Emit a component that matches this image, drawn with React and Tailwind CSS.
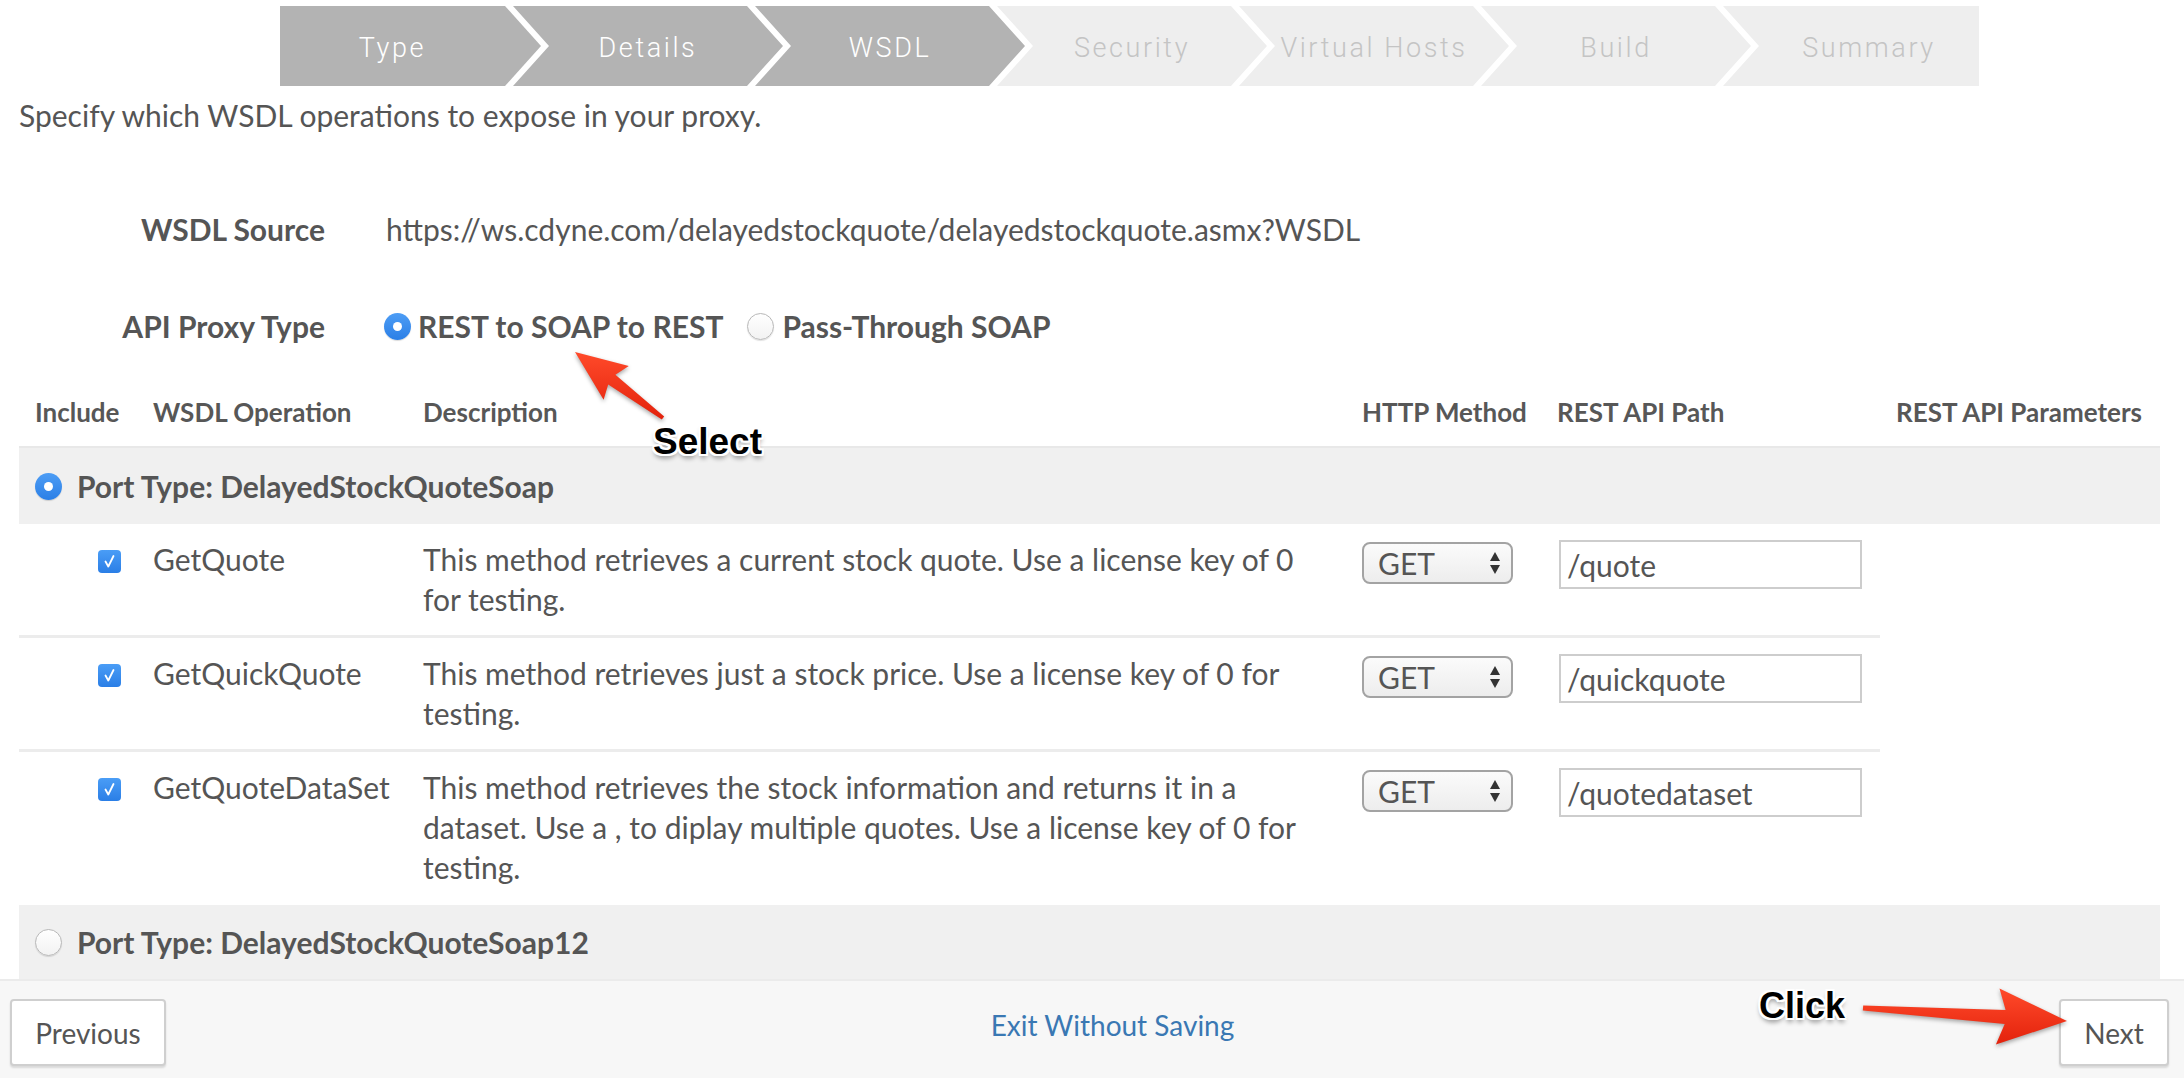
import React from "react";

const steps = [
  { label: "Type", active: true },
  { label: "Details", active: true },
  { label: "WSDL", active: true },
  { label: "Security", active: false },
  { label: "Virtual Hosts", active: false },
  { label: "Build", active: false },
  { label: "Summary", active: false },
];

function Step({ label, active, index, count }) {
  const first = index === 0;
  const last = index === count - 1;
  let shape;
  if (first) {
    shape =
      "w-[261px] pr-[36px] [clip-path:polygon(0_0,calc(100%_-_36px)_0,100%_50%,calc(100%_-_36px)_100%,0_100%)]";
  } else if (last) {
    shape =
      "w-[256px] pl-[36px] -ml-[28px] [clip-path:polygon(0_0,100%_0,100%_100%,0_100%,36px_50%)]";
  } else {
    shape =
      "w-[270px] px-[36px] -ml-[28px] [clip-path:polygon(0_0,calc(100%_-_36px)_0,100%_50%,calc(100%_-_36px)_100%,0_100%,36px_50%)]";
  }
  return (
    <div
      className={`${shape} h-[80px] shrink-0 flex items-center justify-center pt-[4px] ${
        active ? "bg-[#b3b3b3] text-white" : "bg-[#eeeeee] text-[#c4c4c4]"
      }`}
    >
      <span className="font-['Roboto','Liberation_Sans',sans-serif] font-light text-[27px] leading-none tracking-[2.6px] whitespace-nowrap">
        {label}
      </span>
    </div>
  );
}

function Radio({ checked }) {
  if (checked) {
    return (
      <span className="flex w-[27px] h-[27px] rounded-full bg-gradient-to-b from-[#4d9df5] to-[#2b7fe6] items-center justify-center shrink-0 shadow-[0_1px_1px_rgba(0,0,0,0.15)]">
        <span className="block w-[9px] h-[9px] rounded-full bg-white" />
      </span>
    );
  }
  return (
    <span className="block w-[27px] h-[27px] rounded-full border border-[#b8b8b8] bg-gradient-to-b from-white to-[#f2f2f2] shrink-0 shadow-[0_1px_1px_rgba(0,0,0,0.12)]" />
  );
}

function Checkbox() {
  return (
    <span className="flex w-[23px] h-[23px] rounded-[4px] bg-gradient-to-b from-[#4a9df6] to-[#2a7ee6] items-center justify-center shrink-0">
      <svg width="23" height="23" viewBox="0 0 23 23">
        <path d="M7.5 11.5 L10.3 16.5 L15.5 6" fill="none" stroke="#fff" strokeWidth="1.8" strokeLinecap="round" strokeLinejoin="round" />
      </svg>
    </span>
  );
}

function MethodSelect() {
  return (
    <div className="w-[151px] h-[42px] rounded-[8px] border-2 border-[#a3a3a3] bg-gradient-to-b from-[#fbfbfb] to-[#ededed] flex items-center justify-between pl-[14px] pr-[10px]">
      <span className="leading-none">GET</span>
      <svg width="12" height="24" viewBox="0 0 12 24">
        <path d="M6 1 L11 10 L1 10 Z" fill="#333" />
        <path d="M6 23 L11 14 L1 14 Z" fill="#333" />
      </svg>
    </div>
  );
}

function PathInput({ value }) {
  return (
    <div className="w-[303px] h-[49px] border-2 border-[#cdcdcd] bg-white flex items-center pl-[6px] mt-[1px]">
      <span>{value}</span>
    </div>
  );
}

function arrowPoints(x1, y1, x2, y2, headLen, headHalf, tailW, neckW) {
  const dx = x2 - x1;
  const dy = y2 - y1;
  const L = Math.hypot(dx, dy);
  const ux = dx / L;
  const uy = dy / L;
  const nx = -uy;
  const ny = ux;
  const bx = x2 - ux * headLen;
  const by = y2 - uy * headLen;
  const gx = x2 - ux * headLen * 1.12;
  const gy = y2 - uy * headLen * 1.12;
  const pts = [
    [x1 + (nx * tailW) / 2, y1 + (ny * tailW) / 2],
    [bx + (nx * neckW) / 2, by + (ny * neckW) / 2],
    [gx + nx * headHalf, gy + ny * headHalf],
    [x2, y2],
    [gx - nx * headHalf, gy - ny * headHalf],
    [bx - (nx * neckW) / 2, by - (ny * neckW) / 2],
    [x1 - (nx * tailW) / 2, y1 - (ny * tailW) / 2],
  ];
  return pts.map((p) => `${p[0].toFixed(1)},${p[1].toFixed(1)}`).join(" ");
}

const rows = [
  {
    name: "GetQuote",
    lines: ["This method retrieves a current stock quote. Use a license key of 0", "for testing."],
    path: "/quote",
    h: "h-[114px] border-b-[3px] border-[#ececec]",
  },
  {
    name: "GetQuickQuote",
    lines: ["This method retrieves just a stock price. Use a license key of 0 for", "testing."],
    path: "/quickquote",
    h: "h-[114px] border-b-[3px] border-[#ececec]",
  },
  {
    name: "GetQuoteDataSet",
    lines: [
      "This method retrieves the stock information and returns it in a",
      "dataset. Use a , to diplay multiple quotes. Use a license key of 0 for",
      "testing.",
    ],
    path: "/quotedataset",
    h: "h-[153px]",
  },
];

const annot =
  "font-['Liberation_Sans',Arial,sans-serif] font-bold text-black leading-none [text-shadow:-2px_-2px_0_#fff,2px_-2px_0_#fff,-2px_2px_0_#fff,2px_2px_0_#fff,0_-2px_0_#fff,0_2px_0_#fff,-2px_0_0_#fff,2px_0_0_#fff,0_4px_5px_rgba(0,0,0,0.45)]";

export default function App() {
  return (
    <div className="relative w-[2184px] h-[1078px] overflow-hidden bg-white font-['Lato','Open_Sans',sans-serif] text-[#555555] text-[30px] leading-[40px]">
      <div className="flex flex-col h-full">
        {/* Stepper */}
        <div className="flex pt-[6px] pl-[280px]">
          {steps.map((s, i) => (
            <Step key={s.label} label={s.label} active={s.active} index={i} count={steps.length} />
          ))}
        </div>

        {/* Intro */}
        <p className="mt-[9px] pl-[19px] h-[40px]">Specify which WSDL operations to expose in your proxy.</p>

        {/* WSDL source */}
        <div className="mt-[74px] flex h-[40px] items-center">
          <div className="w-[325px] text-right font-bold">WSDL Source</div>
          <div className="ml-[61px]">https://ws.cdyne.com/delayedstockquote/delayedstockquote.asmx?WSDL</div>
        </div>

        {/* API proxy type */}
        <div className="mt-[57px] flex h-[40px] items-center">
          <div className="w-[325px] text-right font-bold">API Proxy Type</div>
          <div className="ml-[59px] flex items-center">
            <Radio checked />
            <span className="ml-[7px] font-bold">REST to SOAP to REST</span>
            <span className="ml-[24px] flex">
              <Radio />
            </span>
            <span className="ml-[8px] font-bold">Pass-Through SOAP</span>
          </div>
        </div>

        {/* Table header */}
        <div className="mt-[46px] ml-[19px] w-[2141px] h-[40px] grid grid-cols-[134px_270px_939px_195px_339px_1fr] font-bold text-[26px] text-[#575757] items-center">
          <div className="pl-[16px]">Include</div>
          <div>WSDL Operation</div>
          <div>Description</div>
          <div>HTTP Method</div>
          <div>REST API Path</div>
          <div>REST API Parameters</div>
        </div>

        {/* Port type 1 */}
        <div className="mt-[14px] ml-[19px] w-[2141px] h-[78px] bg-[#f0f0f0] border-t-2 border-[#e8e8e8] flex items-center pl-[16px]">
          <Radio checked />
          <span className="ml-[15px] font-bold">Port Type: DelayedStockQuoteSoap</span>
        </div>

        {/* Operation rows */}
        <div className="ml-[19px] w-[1861px] flex flex-col">
          {rows.map((r) => (
            <div key={r.name} className={`${r.h} grid grid-cols-[134px_270px_939px_195px_1fr] pt-[15px]`}>
              <div className="pl-[79px] pt-[11px]">
                <Checkbox />
              </div>
              <div className="whitespace-nowrap">{r.name}</div>
              <div className="whitespace-nowrap">
                {r.lines.map((l, i) => (
                  <div key={i}>{l}</div>
                ))}
              </div>
              <div className="pt-[3px]">
                <MethodSelect />
              </div>
              <div className="pl-[2px]">
                <PathInput value={r.path} />
              </div>
            </div>
          ))}
        </div>

        {/* Port type 2 */}
        <div className="ml-[19px] w-[2141px] h-[74px] bg-[#f0f0f0] flex items-center pl-[16px]">
          <Radio />
          <span className="ml-[15px] font-bold">Port Type: DelayedStockQuoteSoap12</span>
        </div>

        {/* Footer */}
        <div className="h-[99px] bg-[#f7f7f7] border-t-2 border-[#ebebeb] flex items-start pt-[18px] pl-[10px] pr-[15px] text-[28px]">
          <button className="w-[156px] h-[67px] bg-white border-2 border-[#cfcfcf] rounded-[4px] shadow-[0_2px_2px_rgba(0,0,0,0.12)] text-[#555555]">
            Previous
          </button>
          <div className="flex-1 h-[67px] flex items-center justify-center -mt-[8px]">
            <span className="text-[#3a78b3]">Exit Without Saving</span>
          </div>
          <button className="w-[110px] h-[67px] bg-white border-2 border-[#cfcfcf] rounded-[4px] shadow-[0_2px_2px_rgba(0,0,0,0.12)] text-[#555555]">
            Next
          </button>
        </div>
      </div>

      {/* Annotations */}
      <svg
        className="absolute left-0 top-0 pointer-events-none drop-shadow-[0_2px_2px_rgba(0,0,0,0.35)]"
        width="2184"
        height="1078"
        viewBox="0 0 2184 1078"
      >
        <defs>
          <linearGradient id="red" x1="0" y1="0" x2="0" y2="1">
            <stop offset="0" stopColor="#ff4a2a" />
            <stop offset="1" stopColor="#e3220c" />
          </linearGradient>
        </defs>
        <polygon points={arrowPoints(663, 418, 575, 352, 46, 21, 4, 12)} fill="url(#red)" />
        <polygon points={arrowPoints(1863, 1008, 2067, 1021, 62, 28, 5, 14)} fill="url(#red)" />
      </svg>
      <div className={`absolute left-[653px] top-[423px] text-[37px] ${annot}`}>Select</div>
      <div className={`absolute left-[1759px] top-[988px] text-[36px] ${annot}`}>Click</div>
    </div>
  );
}
